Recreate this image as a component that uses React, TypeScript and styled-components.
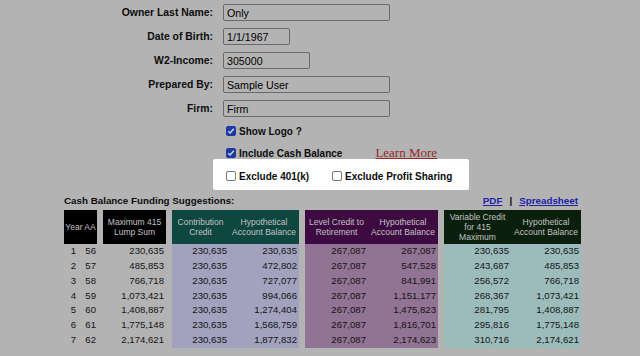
import React from "react";
import styled, { createGlobalStyle } from "styled-components";

const Global = createGlobalStyle`
  html, body { margin: 0; padding: 0; background: #b3b3b3; }
  body { font-family: "Liberation Sans", Arial, sans-serif; color: #0d0d0d; }
`;

const Page = styled.div`
  width: 640px;
  height: 356px;
  overflow: hidden;
  background: #b3b3b3;
`;

const Form = styled.div`
  display: grid;
  grid-template-columns: 213px 1fr;
  column-gap: 10px;
  grid-auto-rows: 24px;
  align-items: center;
`;

const Label = styled.label`
  text-align: right;
  font-weight: bold;
  font-size: 10.4px;
  padding-top: 1px;
`;

const TextInput = styled.input<{ $w: number }>`
  width: ${(p) => p.$w}px;
  height: 17px;
  box-sizing: border-box;
  border: 1px solid #696969;
  border-radius: 2px;
  background: transparent;
  padding: 0 3px;
  margin: 0;
  font-family: "Liberation Sans", Arial, sans-serif;
  font-size: 10.67px;
  color: #000;
  outline: none;
`;

const Options = styled.div`
  display: grid;
  grid-template-columns: 213px 1fr;
  column-gap: 10px;
`;

const OptionRow = styled.div`
  grid-column: 2;
  display: flex;
  align-items: center;
  height: 22px;
`;

const Highlight = styled.div`
  grid-column: 2;
  display: flex;
  align-items: center;
  gap: 20px;
  box-sizing: border-box;
  width: 256px;
  height: 31px;
  margin: -5px 0 0 -10px;
  padding: 3px 0 0 10px;
  background: #ffffff;
  border-radius: 2px;
`;

const CheckItem = styled.span`
  display: inline-flex;
  align-items: center;
  gap: 3px;
  font-weight: bold;
  font-size: 10px;
  white-space: nowrap;
`;

const Box = styled.span<{ $checked?: boolean }>`
  display: inline-flex;
  align-items: center;
  justify-content: center;
  width: 10px;
  height: 10px;
  margin-left: 3px;
  box-sizing: border-box;
  border-radius: 2px;
  border: 1px solid ${(p) => (p.$checked ? "#1b3aa6" : "#7a7a7a")};
  background: ${(p) => (p.$checked ? "#1b3aa6" : "#ffffff")};
`;

const LearnMore = styled.a`
  margin-left: 33px;
  font-family: "Liberation Serif", "Times New Roman", serif;
  font-size: 13px;
  color: #952a2a;
  text-decoration: underline;
`;

const Section = styled.div`
  margin-left: 64px;
  width: 517px;
`;

const TitleRow = styled.div`
  display: flex;
  justify-content: space-between;
  align-items: center;
  height: 16px;
  margin-top: 2px;
  font-weight: bold;
  font-size: 9.8px;
`;

const Links = styled.div`
  display: flex;
  align-items: center;
  gap: 7px;
  padding-right: 3px;
`;

const Link = styled.a`
  color: #1a22a6;
  text-decoration: underline;
`;

const Table = styled.div`
  display: flex;
  gap: 6px;
  margin-top: 2px;
`;

const Group = styled.div<{ $cols: string }>`
  display: grid;
  grid-template-columns: ${(p) => p.$cols};
  grid-template-rows: 34px repeat(7, 14.86px);
`;

const Head = styled.div<{ $bg: string; $span?: number }>`
  grid-column: span ${(p) => p.$span ?? 1};
  background: ${(p) => p.$bg};
  color: #c2c2c2;
  font-size: 8.5px;
  line-height: 10.3px;
  text-align: center;
  display: flex;
  align-items: center;
  justify-content: center;
  white-space: nowrap;
`;

const Cell = styled.div<{ $bg?: string; $pr?: number }>`
  background: ${(p) => p.$bg ?? "transparent"};
  font-size: 9.6px;
  line-height: 14.86px;
  text-align: right;
  padding-right: ${(p) => p.$pr ?? 2}px;
  color: #141414;
  white-space: nowrap;
`;

const Check = () => (
  <svg width="8" height="8" viewBox="0 0 8 8">
    <polyline points="1.2,4.2 3.1,6 6.8,1.8" fill="none" stroke="#d2d2d2" strokeWidth="1.5" />
  </svg>
);

const rows: string[][] = [
  ["1", "56", "230,635", "230,635", "230,635", "267,087", "267,087", "230,635", "230,635"],
  ["2", "57", "485,853", "230,635", "472,802", "267,087", "547,528", "243,687", "485,853"],
  ["3", "58", "766,718", "230,635", "727,077", "267,087", "841,991", "256,572", "766,718"],
  ["4", "59", "1,073,421", "230,635", "994,066", "267,087", "1,151,177", "268,367", "1,073,421"],
  ["5", "60", "1,408,887", "230,635", "1,274,404", "267,087", "1,475,823", "281,795", "1,408,887"],
  ["6", "61", "1,775,148", "230,635", "1,568,759", "267,087", "1,816,701", "295,816", "1,775,148"],
  ["7", "62", "2,174,621", "230,635", "1,877,832", "267,087", "2,174,623", "310,716", "2,174,621"],
];

const fields: [string, string, number][] = [
  ["Owner Last Name:", "Only", 167],
  ["Date of Birth:", "1/1/1967", 67],
  ["W2-Income:", "305000", 87],
  ["Prepared By:", "Sample User", 167],
  ["Firm:", "Firm", 167],
];

type GroupDef = {
  cols: string;
  head: string;
  body?: string;
  heads: { text: React.ReactNode; span?: number }[];
  idx: number[];
  pr?: number[];
};

const groups: GroupDef[] = [
  { cols: "14px 19px", head: "#000", heads: [{ text: "Year AA", span: 2 }], idx: [0, 1], pr: [2, 1] },
  { cols: "63px", head: "#000", heads: [{ text: <>Maximum 415<br />Lump Sum</> }], idx: [2] },
  {
    cols: "57px 70px",
    head: "#0e4640",
    body: "#a2a2bf",
    heads: [{ text: <>Contribution<br />Credit</> }, { text: <>Hypothetical<br />Account Balance</> }],
    idx: [3, 4],
  },
  {
    cols: "63px 70px",
    head: "#3d0b41",
    body: "#917393",
    heads: [{ text: <>Level Credit to<br />Retirement</> }, { text: <>Hypothetical<br />Account Balance</> }],
    idx: [5, 6],
  },
  {
    cols: "67px 70px",
    head: "#0a1f0c",
    body: "#9cbcbc",
    heads: [{ text: <>Variable Credit<br />for 415<br />Maximum</> }, { text: <>Hypothetical<br />Account Balance</> }],
    idx: [7, 8],
  },
];

export default function App() {
  return (
    <Page>
      <Global />
      <Form>
        {fields.map(([l, v, w]) => (
          <React.Fragment key={l}>
            <Label>{l}</Label>
            <div>
              <TextInput $w={w} defaultValue={v} readOnly />
            </div>
          </React.Fragment>
        ))}
      </Form>
      <Options>
        <OptionRow>
          <CheckItem>
            <Box $checked><Check /></Box>
            Show Logo ?
          </CheckItem>
        </OptionRow>
        <OptionRow>
          <CheckItem>
            <Box $checked><Check /></Box>
            Include Cash Balance
          </CheckItem>
          <LearnMore>Learn More</LearnMore>
        </OptionRow>
        <Highlight>
          <CheckItem>
            <Box />
            Exclude 401(k)
          </CheckItem>
          <CheckItem>
            <Box />
            Exclude Profit Sharing
          </CheckItem>
        </Highlight>
      </Options>
      <Section>
        <TitleRow>
          <span>Cash Balance Funding Suggestions:</span>
          <Links>
            <Link>PDF</Link>
            <span>|</span>
            <Link>Spreadsheet</Link>
          </Links>
        </TitleRow>
        <Table>
          {groups.map((g, gi) => (
            <Group key={gi} $cols={g.cols}>
              {g.heads.map((h, hi) => (
                <Head key={hi} $bg={g.head} $span={h.span}>
                  <span>{h.text}</span>
                </Head>
              ))}
              {rows.map((r, ri) =>
                g.idx.map((ci, k) => (
                  <Cell key={`${ri}-${ci}`} $bg={g.body} $pr={g.pr ? g.pr[k] : 2}>
                    {r[ci]}
                  </Cell>
                ))
              )}
            </Group>
          ))}
        </Table>
      </Section>
    </Page>
  );
}
